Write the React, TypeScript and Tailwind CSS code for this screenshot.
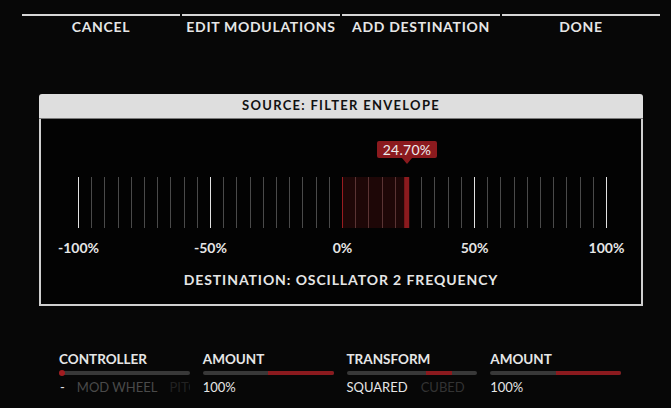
import React from "react";

const TABS = ["CANCEL", "EDIT MODULATIONS", "ADD DESTINATION", "DONE"];
const SCALE = ["-100%", "-50%", "0%", "50%", "100%"];

const METER_W = 528;
const STEP = METER_W / 40;
const VALUE = 0.247; // bipolar, -1..1

function Meter() {
  const zero = METER_W / 2;
  const pos = zero + VALUE * zero;
  return (
    <svg width={METER_W + 1} height={51} className="block">
      <rect x={zero} y={0} width={pos - zero} height={51} fill="#1e0707" />
      {Array.from({ length: 41 }).map((_, i) => {
        const x = Math.round(i * STEP) + 0.5;
        const major = i % 10 === 0;
        const inFill = x > zero && x < pos;
        return (
          <line
            key={i}
            x1={x}
            x2={x}
            y1={0}
            y2={51}
            stroke={major ? "#e2e2e2" : inFill ? "#5a3434" : "#4a4a4a"}
            strokeWidth={1}
          />
        );
      })}
      <rect x={zero} y={0} width={1} height={51} fill="#9a1c20" />
      <rect x={pos - 3} y={0} width={5} height={51} fill="#8b1a1e" />
    </svg>
  );
}

function Bar({ children }: { children?: React.ReactNode }) {
  return (
    <div className="relative mt-[3px] h-[4px] w-full rounded-full bg-[#383838]">
      {children}
    </div>
  );
}

export default function App() {
  return (
    <div
      className="min-h-[408px] w-[671px] bg-[#070707] text-[#e6e6e6]"
      style={{ fontFamily: "Lato, 'Open Sans', sans-serif" }}
    >
      {/* Top actions */}
      <div className="flex gap-[2px] pl-[22px] pr-[11px] pt-[14px]">
        {TABS.map((t) => (
          <div
            key={t}
            className="flex-1 border-t-2 border-[#d6d6d6] pt-[2px] text-center text-[14px] font-bold leading-[17px] tracking-[0.05em]"
          >
            {t}
          </div>
        ))}
      </div>

      {/* Modulation panel */}
      <div className="ml-[39px] mt-[59px] w-[604px]">
        <div className="flex h-[25px] items-center justify-center rounded-t-[3px] border-b border-[#7a7a7a] bg-[#dedede]">
          <span className="text-[13px] font-bold tracking-[0.1em] text-[#111]">
            SOURCE: FILTER ENVELOPE
          </span>
        </div>
        <div className="h-[187px] border-x-2 border-b-2 border-[#cfcfcf] bg-[#030303] pt-[22px]">
          <div className="relative ml-[37px] w-[529px] pt-[36px]">
            {/* value tooltip */}
            <div className="absolute left-[299px] top-0 flex flex-col items-center">
              <div className="flex h-[17px] w-[60px] items-center justify-center rounded-[2px] bg-[#8b1a1e] text-[14px] leading-none tracking-[0.02em] text-[#eee]">
                24.70%
              </div>
              <div className="h-0 w-0 border-x-[5px] border-t-[6px] border-x-transparent border-t-[#8b1a1e]" />
            </div>
            <Meter />
            <div className="mt-[11px] flex justify-between">
              {SCALE.map((s) => (
                <div key={s} className="flex w-px justify-center">
                  <span className="whitespace-nowrap text-[14px] font-bold leading-[17px]">
                    {s}
                  </span>
                </div>
              ))}
            </div>
          </div>
          <div className="mt-[15px] text-center text-[14px] font-bold leading-[17px] tracking-[0.065em]">
            DESTINATION: OSCILLATOR 2 FREQUENCY
          </div>
        </div>
      </div>

      {/* Controls */}
      <div className="ml-[59px] mt-[45px] grid w-[562px] grid-cols-4 gap-x-[13px]">
        <div>
          <div className="text-[13.5px] font-bold leading-[17px]">CONTROLLER</div>
          <Bar>
            <div className="absolute left-0 top-[-1px] h-[6px] w-[6px] rounded-full bg-[#a11c20]" />
          </Bar>
          <div className="mt-[4px] flex w-[131px] gap-[12px] overflow-hidden whitespace-nowrap text-[13px] leading-[17px]">
            <span className="shrink-0 pl-[1px] text-[#e6e6e6]">-</span>
            <span className="shrink-0 text-[#4a4a4a]">MOD WHEEL</span>
            <span className="min-w-0 overflow-hidden text-[#222]">PITCH</span>
          </div>
        </div>
        <div>
          <div className="text-[13.5px] font-bold leading-[17px]">AMOUNT</div>
          <Bar>
            <div className="absolute inset-y-0 left-1/2 right-0 rounded-r-full bg-[#8b1a1e]" />
          </Bar>
          <div className="mt-[4px] text-[13px] leading-[17px]">100%</div>
        </div>
        <div>
          <div className="text-[13.5px] font-bold leading-[17px]">TRANSFORM</div>
          <Bar>
            <div className="absolute inset-y-0 left-[79px] w-[26px] bg-[#8b1a1e]" />
          </Bar>
          <div className="mt-[4px] flex gap-[13px] whitespace-nowrap text-[13px] leading-[17px]">
            <span>SQUARED</span>
            <span className="text-[#333]">CUBED</span>
          </div>
        </div>
        <div>
          <div className="text-[13.5px] font-bold leading-[17px]">AMOUNT</div>
          <Bar>
            <div className="absolute inset-y-0 left-1/2 right-0 rounded-r-full bg-[#8b1a1e]" />
          </Bar>
          <div className="mt-[4px] text-[13px] leading-[17px]">100%</div>
        </div>
      </div>
    </div>
  );
}
